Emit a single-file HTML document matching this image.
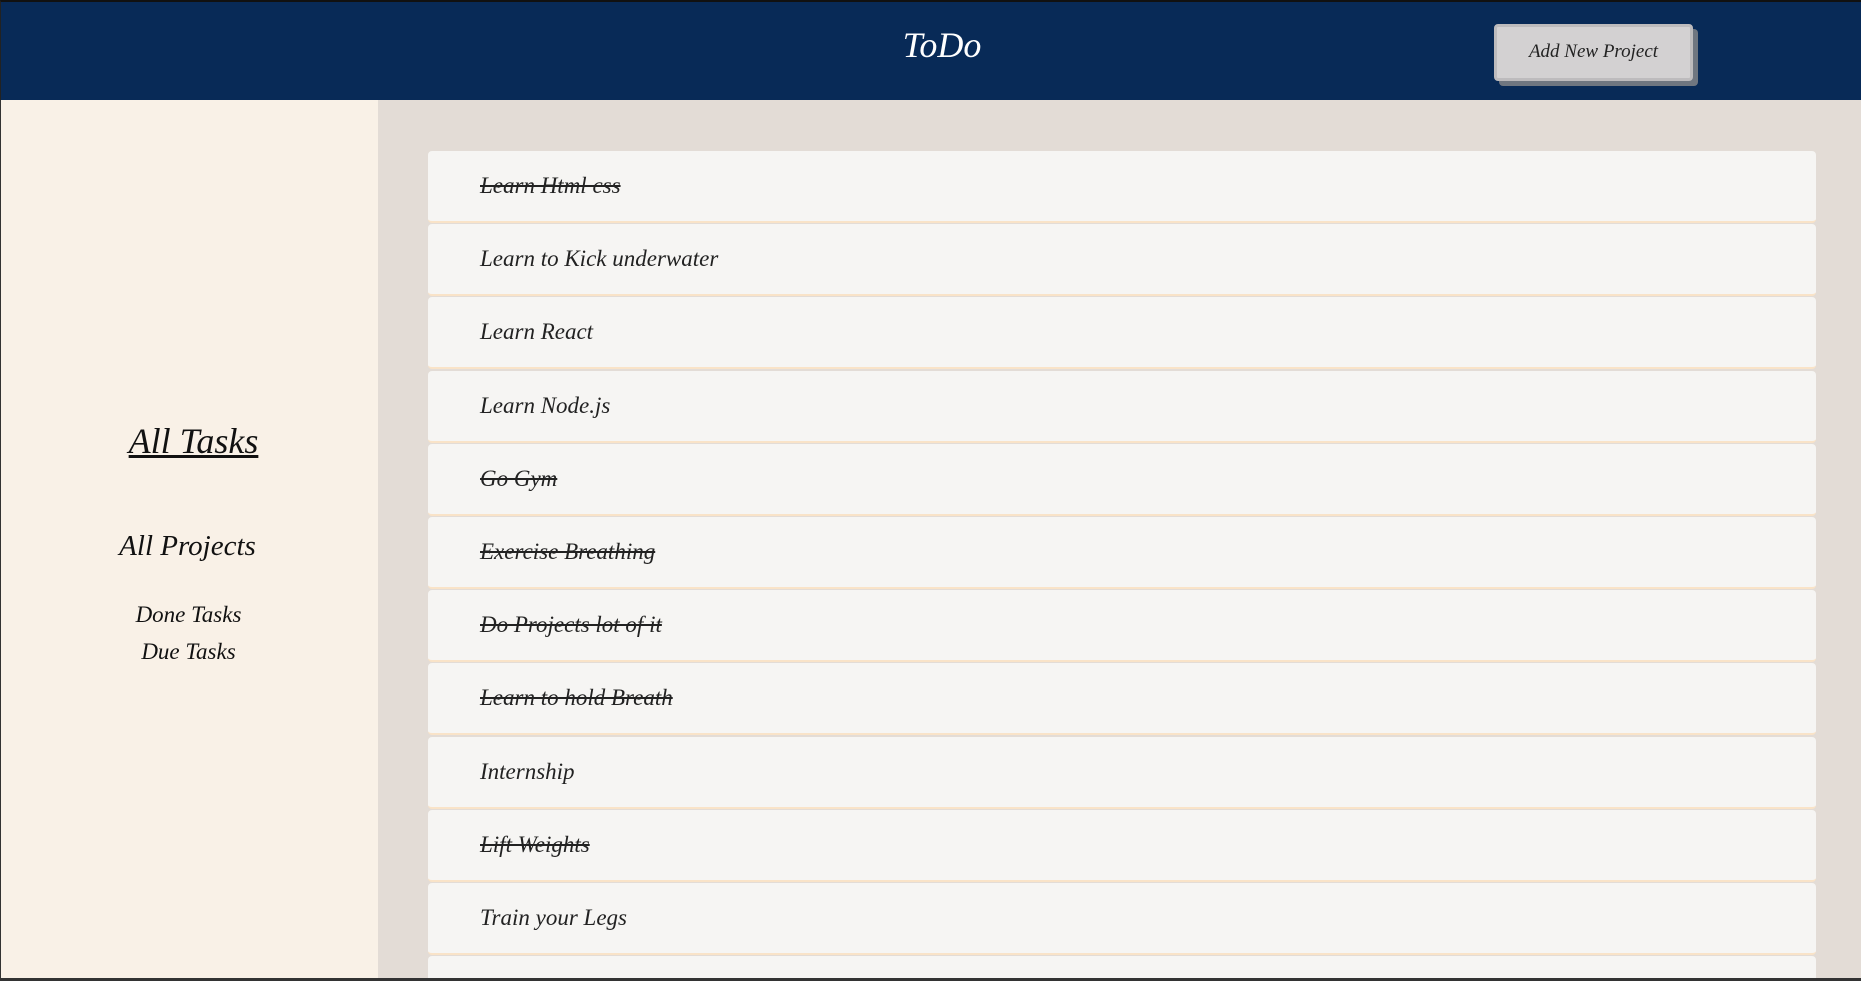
<!DOCTYPE html>
<html><head><style>
*{margin:0;padding:0;box-sizing:border-box}
html,body{width:1861px;height:981px;overflow:hidden;background:#e3dcd6;font-family:"Liberation Serif",serif;font-style:italic}
.wrap{position:relative;width:1861px;height:981px;overflow:hidden}
.hdr{position:absolute;left:0;top:0;width:1861px;height:100px;background:#082a57;border-top:2px solid #111;border-left:1px solid #222}
.title{position:absolute;left:0;width:1882px;text-align:center;top:22px;color:#fff;font-size:36px}
.btn{position:absolute;left:1493px;top:22px;width:199px;height:57px;background:#d3d1d2;border:3px solid #bdbbbd;border-radius:4px;box-shadow:5px 5px 0 #6f7680;text-align:center;line-height:50px;font-size:19px;color:#222}
.side{position:absolute;left:0;top:100px;width:378px;height:881px;background:#f9f1e7;border-left:1px solid #333}
.s{position:absolute;left:0;width:385px;text-align:center;color:#111}
.cards{position:absolute;left:428px;top:151px;width:1388px;height:827px;overflow:hidden}
.c{height:72px;margin-bottom:1.2px;background:#f6f5f3;border-radius:4px;border-bottom:2px solid #f9e3c8;font-size:23px;line-height:70px;padding-left:52px;color:#222}
.d{text-decoration:line-through}
.bot{position:absolute;left:0;top:978px;width:1861px;height:3px;background:#333}
</style></head><body><div class="wrap">
<div class="hdr"><div class="title">ToDo</div><div class="btn">Add New Project</div></div>
<div class="side">
<div class="s" style="top:320px;font-size:36px;text-decoration:underline">All Tasks</div>
<div class="s" style="top:430px;font-size:29px;left:-6px">All Projects</div>
<div class="s" style="top:502px;font-size:23px;left:-5px">Done Tasks</div>
<div class="s" style="top:539px;font-size:23px;left:-5px">Due Tasks</div>
</div>
<div class="cards">
<div class="c d">Learn Html css</div>
<div class="c">Learn to Kick underwater</div>
<div class="c">Learn React</div>
<div class="c">Learn Node.js</div>
<div class="c d">Go Gym</div>
<div class="c d">Exercise Breathing</div>
<div class="c d">Do Projects lot of it</div>
<div class="c d">Learn to hold Breath</div>
<div class="c">Internship</div>
<div class="c d">Lift Weights</div>
<div class="c">Train your Legs</div>
<div class="c">Chest Day</div>
</div>
<div class="bot"></div>
</div></body></html>
